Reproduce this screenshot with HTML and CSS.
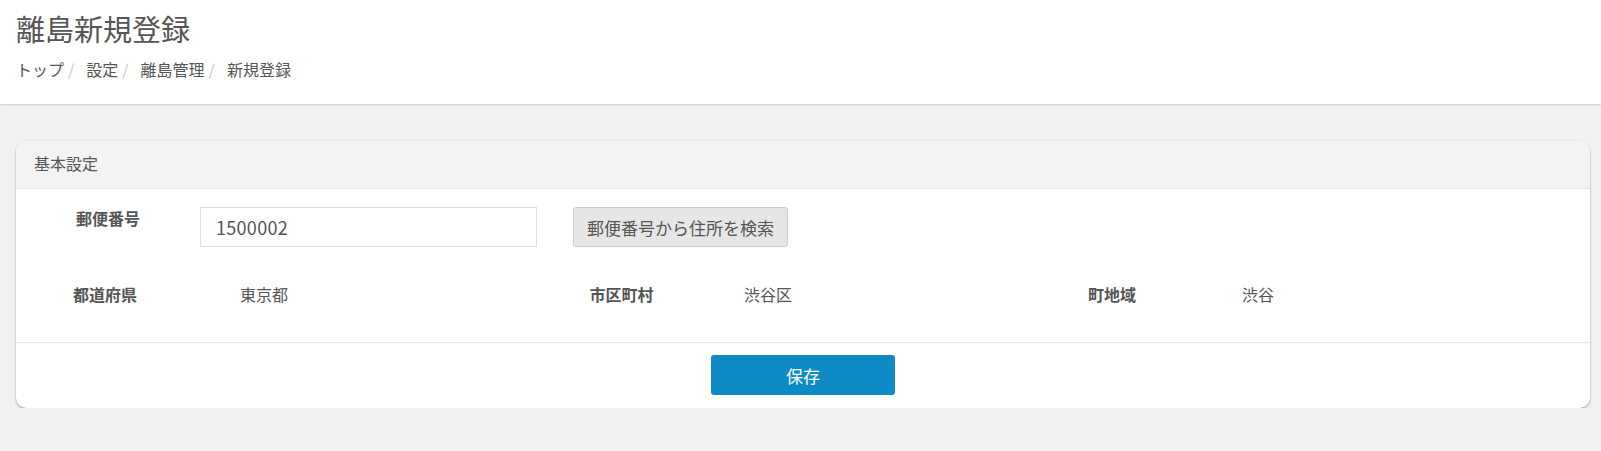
FILE: index.html
```html
<!DOCTYPE html>
<html lang="ja">
<head>
<meta charset="utf-8">
<title>離島新規登録</title>
<link rel="stylesheet" href="styles.css">
</head>
<body>
<header class="page-header">
  <h1 class="page-title">離島新規登録</h1>
  <ol class="breadcrumb">
    <li>トップ</li>
    <li>設定</li>
    <li>離島管理</li>
    <li>新規登録</li>
  </ol>
</header>
<main class="content">
  <section class="card">
    <div class="card-header">基本設定</div>
    <div class="card-body">
      <div class="row-zip">
        <div class="label zip-label">郵便番号</div>
        <input class="text-input" type="text" value="1500002">
        <button class="btn-search" type="button">郵便番号から住所を検索</button>
      </div>
      <div class="row-address">
        <div class="label">都道府県</div>
        <div class="value">東京都</div>
        <div class="label">市区町村</div>
        <div class="value">渋谷区</div>
        <div class="label">町地域</div>
        <div class="value">渋谷</div>
      </div>
    </div>
    <div class="card-footer">
      <button class="btn-save" type="button">保存</button>
    </div>
  </section>
</main>
</body>
</html>
```

FILE: styles.css
```css
* { box-sizing: border-box; }

html, body {
  margin: 0;
  padding: 0;
}

body {
  background: #f1f1f1;
  font-family: "Noto Sans CJK JP", "Noto Sans", sans-serif;
  color: #555;
}

.page-header {
  background: #fff;
  height: 104px;
  padding: 8px 16px 0;
  box-shadow: 0 1px 2px rgba(0, 0, 0, 0.16);
}

.page-title {
  margin: 0;
  font-size: 29px;
  font-weight: 400;
  line-height: 40px;
  color: #555;
}

.breadcrumb {
  list-style: none;
  margin: 9px 0 0;
  padding: 0;
  display: flex;
  font-size: 16px;
  line-height: 24px;
  color: #555;
}

.breadcrumb li + li::before {
  content: "/";
  color: #c8c8c8;
  padding: 0 12px 0 4px;
}

.content {
  padding: 37px 11px 0 16px;
}

.card {
  background: #fff;
  border-radius: 10px;
  box-shadow: 0 1px 2px rgba(0, 0, 0, 0.38), 0 0 2px rgba(0, 0, 0, 0.06);
  overflow: hidden;
}

.card-header {
  background: #f3f3f3;
  height: 48px;
  border-bottom: 1px solid #e3e6ea;
  padding: 0 18px;
  font-size: 16px;
  line-height: 45px;
  color: #555;
}

.card-body {
  padding: 18px 0 28px;
}

.row-zip {
  display: flex;
  align-items: flex-start;
  height: 40px;
}

.label {
  font-size: 16px;
  font-weight: 700;
  line-height: 20px;
  text-align: center;
  color: #555;
}

.zip-label {
  width: 184px;
  padding-top: 1px;
}

.text-input {
  width: 337px;
  height: 40px;
  border: 1px solid #dedede;
  border-radius: 0;
  padding: 0 15px;
  font-family: "Noto Sans CJK JP", "Noto Sans", sans-serif;
  font-size: 18px;
  letter-spacing: 0.3px;
  color: #555;
  outline: none;
}

.btn-search {
  margin-left: 36px;
  width: 215px;
  height: 40px;
  background: #e6e6e6;
  border: 1px solid #cccccc;
  border-radius: 3px;
  font-family: "Noto Sans CJK JP", "Noto Sans", sans-serif;
  font-size: 17px;
  color: #555;
  padding: 0;
}

.row-address {
  margin-top: 27px;
  display: grid;
  grid-template-columns: 178px 351px 153px 330px 168px 1fr;
  align-items: center;
  height: 40px;
}

.value {
  font-size: 16px;
  line-height: 20px;
  padding-left: 46px;
  color: #555;
}

.card-footer {
  border-top: 1px solid #e6e6e6;
  padding: 12px 0 13px;
  display: flex;
  justify-content: center;
}

.btn-save {
  width: 184px;
  height: 40px;
  background: #0e8bc4;
  border: none;
  border-radius: 3px;
  color: #fff;
  font-family: "Noto Sans CJK JP", "Noto Sans", sans-serif;
  font-size: 17px;
  padding: 0;
}
```
